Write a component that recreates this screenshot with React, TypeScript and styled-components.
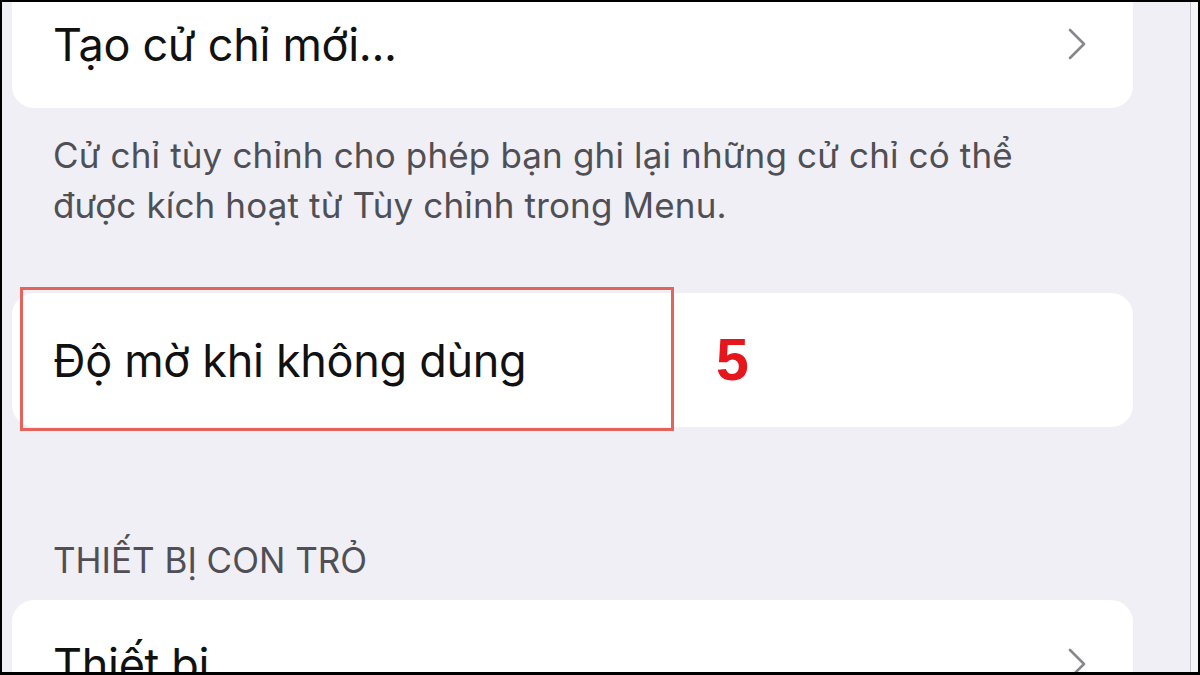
import React from "react";
import styled, { createGlobalStyle } from "styled-components";

const GlobalStyle = createGlobalStyle`
  html, body {
    margin: 0;
    padding: 0;
    background: #000;
  }
  * {
    box-sizing: border-box;
  }
`;

const Frame = styled.div`
  width: 1200px;
  height: 675px;
  padding: 2px 2px 3px 2px;
  display: flex;
  background: #000;
`;

const Screen = styled.div`
  flex: 1;
  overflow: hidden;
  background: #efeff5;
  display: flex;
  flex-direction: column;
  padding: 0 57px 0 10px;
  font-family: Inter, "Noto Sans", sans-serif;
`;

const EdgeStrip = styled.div`
  width: 8px;
  border-left: 1px solid #c6c6cc;
  background: #f6f6f9;
`;

const Card = styled.div<{ $top?: number }>`
  position: relative;
  background: #fff;
  border-radius: 22px;
  margin-top: ${({ $top }) => $top ?? 0}px;
`;

const Row = styled.div<{ $height: number }>`
  height: ${({ $height }) => $height}px;
  display: flex;
  align-items: center;
  justify-content: space-between;
  padding: 0 46px 0 41px;
`;

const RowLabel = styled.span`
  font-size: 45px;
  color: #111;
  letter-spacing: -0.3px;
`;

const Footnote = styled.p`
  margin: 22px 0 0;
  padding: 0 41px;
  font-size: 35px;
  line-height: 50px;
  letter-spacing: 0.15px;
  color: #4f4f55;
`;

const SectionHeader = styled.div`
  margin-top: 111px;
  padding: 0 41px;
  font-size: 35px;
  line-height: 44px;
  color: #4f4f55;
`;

// red annotation frame drawn over the opacity row
const Highlight = styled.div`
  position: absolute;
  left: 8px;
  top: -6px;
  width: 654px;
  height: 144px;
  border: 3px solid #e4645d;
`;

const StepNumber = styled.span`
  position: absolute;
  left: 704px;
  top: 50%;
  transform: translateY(-50%);
  font-family: "Liberation Sans", Arial, sans-serif;
  font-weight: 700;
  font-size: 59px;
  color: #e5161c;
`;

const Chevron = () => (
  <svg width="20" height="32" viewBox="0 0 20 32" fill="none">
    <polyline
      points="3,2 17,16 3,30"
      stroke="#87878c"
      strokeWidth="2.6"
      strokeLinecap="round"
      strokeLinejoin="round"
    />
  </svg>
);

export default function App() {
  return (
    <>
      <GlobalStyle />
      <Frame>
        <Screen>
          <Card $top={-22}>
            <Row $height={128}>
              <RowLabel>Tạo cử chỉ mới...</RowLabel>
              <Chevron />
            </Row>
          </Card>

          <Footnote>
            Cử chỉ tùy chỉnh cho phép bạn ghi lại những cử chỉ có thể
            <br />
            được kích hoạt từ Tùy chỉnh trong Menu.
          </Footnote>

          <Card $top={63}>
            <Row $height={134}>
              <RowLabel>Độ mờ khi không dùng</RowLabel>
            </Row>
            <Highlight />
            <StepNumber>5</StepNumber>
          </Card>

          <SectionHeader>THIẾT BỊ CON TRỎ</SectionHeader>

          <Card $top={18}>
            <Row $height={128}>
              <RowLabel>Thiết bị</RowLabel>
              <Chevron />
            </Row>
          </Card>
        </Screen>
        <EdgeStrip />
      </Frame>
    </>
  );
}
